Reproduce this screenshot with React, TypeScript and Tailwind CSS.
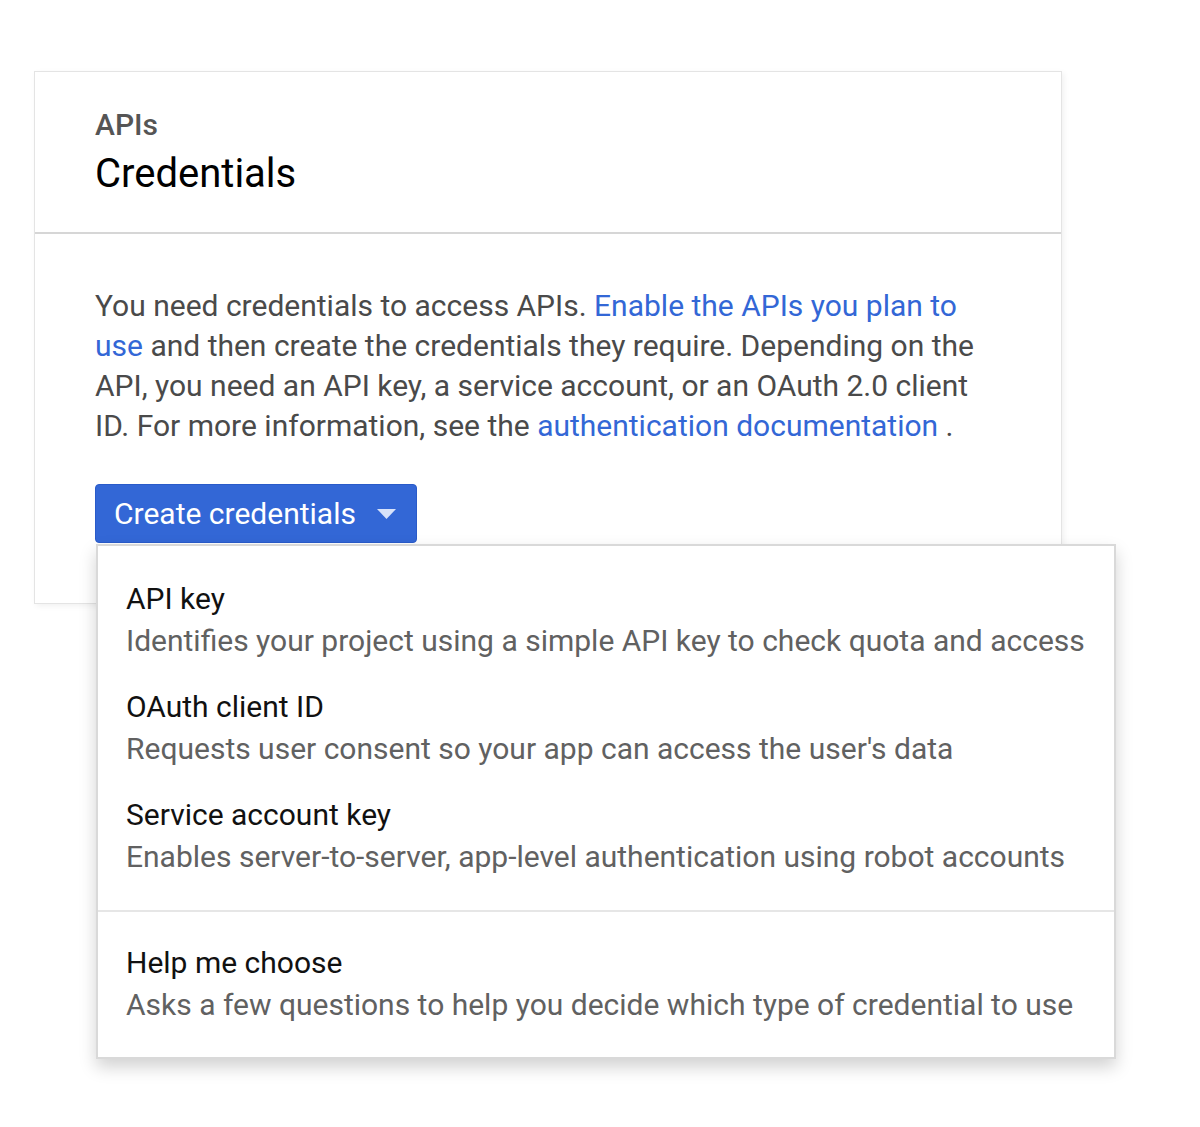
const items = [
  { title: "API key", desc: "Identifies your project using a simple API key to check quota and access" },
  { title: "OAuth client ID", desc: "Requests user consent so your app can access the user's data" },
  { title: "Service account key", desc: "Enables server-to-server, app-level authentication using robot accounts" },
];

function MenuItem({ title, desc }: { title: string; desc: string }) {
  return (
    <div className="px-[28px] py-[12px]">
      <div className="text-[30px] leading-[42px] text-[#111]">{title}</div>
      <div className="text-[30px] leading-[42px] text-[#616161] whitespace-nowrap">{desc}</div>
    </div>
  );
}

export default function App() {
  return (
    <div className="min-h-[1127px] bg-white pl-[34px] pt-[71px] font-['Roboto',sans-serif]">
      <div className="w-[1028px] border border-[#e4e4e4] bg-white shadow-[2px_2px_6px_rgba(0,0,0,0.06)]">
        <div className="px-[60px] pt-[36px] pb-[32px] border-b-2 border-[#d6d6d6]">
          <div className="text-[30px] leading-[34px] font-medium text-[#555]">APIs</div>
          <div className="mt-[6px] text-[40px] leading-[52px] text-black">Credentials</div>
        </div>
        <div className="px-[60px] pt-[52px] pb-[60px]">
          <p className="text-[30px] leading-[40px] text-[#4a4a4a] w-[890px]">
            You need credentials to access APIs.{" "}
            <span className="text-[#3367d6]">Enable the APIs you plan to use</span> and then
            create the credentials they require. Depending on the API, you need an API key, a
            service account, or an OAuth 2.0 client ID. For more information, see the{" "}
            <span className="text-[#3367d6]">authentication documentation</span> .
          </p>
          <div className="relative mt-[38px]">
            <button className="flex h-[59px] w-[322px] items-center rounded-[4px] border border-[#2a5bc9] bg-[#3367d6] pl-[18px] text-[30px] text-white">
              Create credentials
              <svg className="ml-[21px]" width="19" height="10" viewBox="0 0 19 10">
                <path d="M0 0 L19 0 L9.5 10 Z" fill="#d7e2fa" />
              </svg>
            </button>
            <div className="absolute left-[1px] top-[60px] w-[1020px] border-2 border-[#d9d9d9] bg-white shadow-[0_8px_16px_rgba(0,0,0,0.18)]">
              <div className="py-[20px]">
                {items.map((it) => (
                  <MenuItem key={it.title} title={it.title} desc={it.desc} />
                ))}
              </div>
              <div className="border-t-2 border-[#e6e6e6] pt-[18px] pb-[19px]">
                <MenuItem
                  title="Help me choose"
                  desc="Asks a few questions to help you decide which type of credential to use"
                />
              </div>
            </div>
          </div>
        </div>
      </div>
    </div>
  );
}
